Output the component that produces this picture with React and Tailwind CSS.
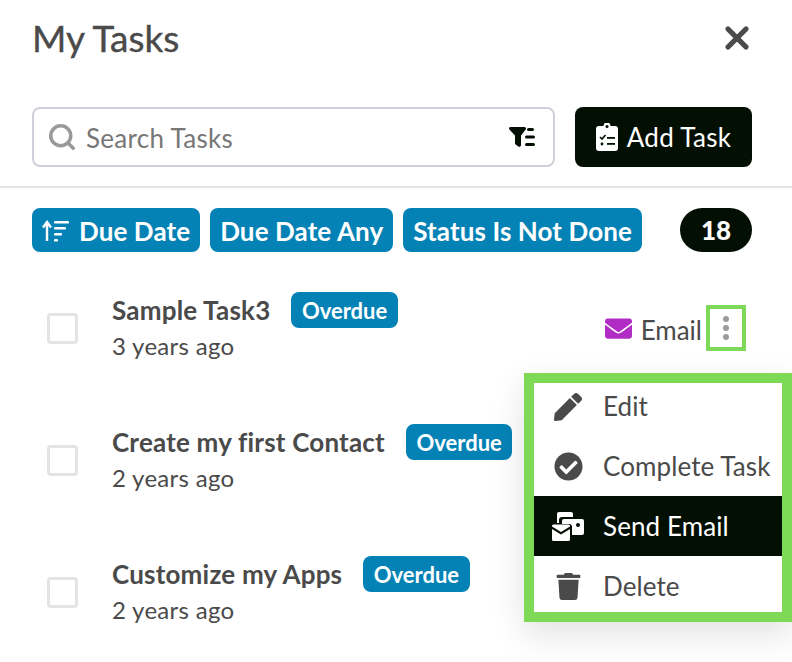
import React from 'react'
import { FaPen, FaCheckCircle, FaTrash, FaEnvelope } from 'react-icons/fa'
import { X, Search } from 'lucide-react'

const tasks = [
  { name: 'Sample Task3', ago: '3 years ago', email: true },
  { name: 'Create my first Contact', ago: '2 years ago' },
  { name: 'Customize my Apps', ago: '2 years ago' },
]

const FilterIcon = () => (
  <svg width="28" height="20" viewBox="0 0 28 20" fill="#040f04">
    <path d="M0 1.500C0 .7.7 0 1.500 0h14c1.300 0 2 1.500 1.200 2.500L12 8.500V18c0 1.500-1.500 2.300-2.700 1.500l-2-1.500C6.500 17.500 6 17 6 16V8.500L.4 2.500C.1 2.200 0 1.900 0 1.500z" />
    <rect x="18" y="1" width="7" height="3" rx="1.500" />
    <rect x="16" y="8.500" width="10" height="3" rx="1.500" />
    <rect x="16" y="16" width="10" height="3" rx="1.500" />
  </svg>
)

const ClipboardIcon = () => (
  <svg width="22" height="28" viewBox="0 0 22 28" fill="#fff">
    <path d="M3 3h4.500a3.500 3.500 0 0 1 7 0H19a3 3 0 0 1 3 3v19a3 3 0 0 1-3 3H3a3 3 0 0 1-3-3V6a3 3 0 0 1 3-3z" />
    <circle cx="11" cy="3.500" r="1.500" fill="#040f04" />
    <path d="M4 14l2 2 3.500-4" fill="none" stroke="#040f04" strokeWidth="1.600" />
    <rect x="11" y="14" width="8" height="1.800" fill="#040f04" />
    <circle cx="6" cy="21" r="1.400" fill="#040f04" />
    <rect x="11" y="20" width="8" height="1.800" fill="#040f04" />
  </svg>
)

const SortIcon = () => (
  <svg width="28" height="22" viewBox="0 0 28 22" fill="#fff">
    <path d="M5 21V4M1 7.500L5 2l4 5.500" fill="none" stroke="#fff" strokeWidth="2.400" />
    <rect x="12" y="1" width="15" height="2.600" rx="1.200" />
    <rect x="12" y="7" width="12" height="2.600" rx="1.200" />
    <rect x="12" y="13" width="8" height="2.600" rx="1.200" />
    <rect x="12" y="19" width="4" height="2.600" rx="1.200" />
  </svg>
)

const SendEmailIcon = () => (
  <svg width="32" height="29" viewBox="0 0 32 29" fill="#fff">
    <path d="M5 2a2 2 0 0 1 2-2h12a2 2 0 0 1 2 2v3H10a3 3 0 0 0-3 3v3H5z" />
    <path d="M10 9a2 2 0 0 1 2-2h18a2 2 0 0 1 2 2v12a2 2 0 0 1-2 2H20v-8a3 3 0 0 0-3-3h-7z" />
    <circle cx="26" cy="13" r="2" fill="#040f04" />
    <path d="M0 14a1.500 1.500 0 0 1 1.500-1.500h15A1.500 1.500 0 0 1 18 14v.500l-9 5.500-9-5.500z" />
    <path d="M0 17l9 5.500 9-5.500v10.500a1.500 1.500 0 0 1-1.500 1.500h-15A1.500 1.500 0 0 1 0 27.500z" />
  </svg>
)

const Chip = ({ children }) => (
  <span className="flex h-11 items-center rounded-lg bg-[#0582b5] px-[10px] pt-[2px] text-[26px] font-bold tracking-[0.1px] text-white">
    {children}
  </span>
)

const Overdue = () => (
  <span className="flex h-9 items-center rounded-lg bg-[#0582b5] px-[10.500px] text-[22px] font-bold text-white">
    Overdue
  </span>
)

const MenuItem = ({ icon, label, active, className }) => (
  <div className={`flex items-center ${active ? 'bg-[#040f04] text-white' : 'text-[#4a4a4a]'} ${className}`}>
    <span className="flex w-[69px] justify-center pr-[1px]">{icon}</span>
    <span>{label}</span>
  </div>
)

export default function App() {
  return (
    <div className="relative h-[662px] w-[792px] overflow-hidden bg-white font-['Lato','Open_Sans',sans-serif] text-[#4a4a4a]">
      <div className="flex items-start justify-between pl-[32px] pr-[37px] pt-[14px]">
        <h1 className="text-[37px] font-normal leading-[48px] [-webkit-text-stroke:0.4px_#4a4a4a]">My Tasks</h1>
        <X size={36} strokeWidth={3.500} className="mt-[6px] text-[#4a4a4a]" />
      </div>

      <div className="flex gap-5 pl-[32px] pr-[40px] pt-[45px]">
        <div className="flex h-[60px] flex-1 items-center rounded-lg border-2 border-[#ced1d9] pl-[13px] pr-[16px]">
          <Search size={30} strokeWidth={2.800} className="text-[#999999]" />
          <span className="ml-[9px] flex-1 pt-[2px] text-[26px] tracking-[0.3px] text-[#777777]">Search Tasks</span>
          <FilterIcon />
        </div>
        <button className="flex h-[60px] w-[177px] items-center justify-center gap-[9px] rounded-lg bg-[#040f04] text-[26px] tracking-[0.3px] text-white">
          <ClipboardIcon />
          Add Task
        </button>
      </div>

      <div className="mt-[19px] h-[2px] bg-[#e3e3e8]" />

      <div className="flex items-center pl-[32px] pr-[40px] pt-[20px]">
        <div className="flex gap-[10px]">
          <Chip>
            <span className="mr-[9px]"><SortIcon /></span>
            Due Date
          </Chip>
          <Chip>Due Date Any</Chip>
          <Chip>Status Is Not Done</Chip>
        </div>
        <span className="ml-auto flex h-11 w-[72px] items-center justify-center rounded-full bg-[#040f04] text-[26px] font-black text-white">
          18
        </span>
      </div>

      <div className="pt-[39px]">
        {tasks.map((task) => (
          <div key={task.name} className="flex h-[132px] items-start pl-[47px] pr-[46px]">
            <span className="mt-[22px] h-[31px] w-[31px] rounded border-[3px] border-[#e4e4e4]" />
            <div className="ml-[34px]">
              <div className="flex items-center gap-[21px]">
                <span className="text-[26px] font-bold leading-[38px] tracking-[0.2px]">{task.name}</span>
                <Overdue />
              </div>
              <div className="mt-[-1px] text-[24px] leading-[36px] tracking-[0.3px]">{task.ago}</div>
            </div>
            {task.email && (
              <div className="ml-auto mt-[14px] flex items-center">
                <FaEnvelope size={27} className="text-[#b02cc4]" />
                <span className="ml-[9px] mr-[4px] pt-[5px] text-[26px]">Email</span>
                <span className="flex h-[46px] w-10 flex-col items-center justify-center gap-[3px] border-4 border-[#7ed957]">
                  <i className="h-[6px] w-[6px] rounded-full bg-[#9b9b9b]" />
                  <i className="h-[6px] w-[6px] rounded-full bg-[#9b9b9b]" />
                  <i className="h-[6px] w-[6px] rounded-full bg-[#9b9b9b]" />
                </span>
              </div>
            )}
          </div>
        ))}
      </div>

      <div className="absolute left-[524px] top-[373px] w-[268px] border-[10px] border-[#7ed957] bg-white text-[26px] tracking-[0.1px] shadow-[0_12px_32px_rgba(0,0,0,0.12)]">
        <MenuItem className="h-[53px] pb-[6px]" icon={<FaPen size={28} />} label="Edit" />
        <MenuItem className="h-[60px]" icon={<FaCheckCircle size={29} />} label="Complete Task" />
        <MenuItem className="h-[60px]" active icon={<SendEmailIcon />} label="Send Email" />
        <MenuItem className="h-[56px] pt-[5px]" icon={<FaTrash size={27} />} label="Delete" />
      </div>
    </div>
  )
}
